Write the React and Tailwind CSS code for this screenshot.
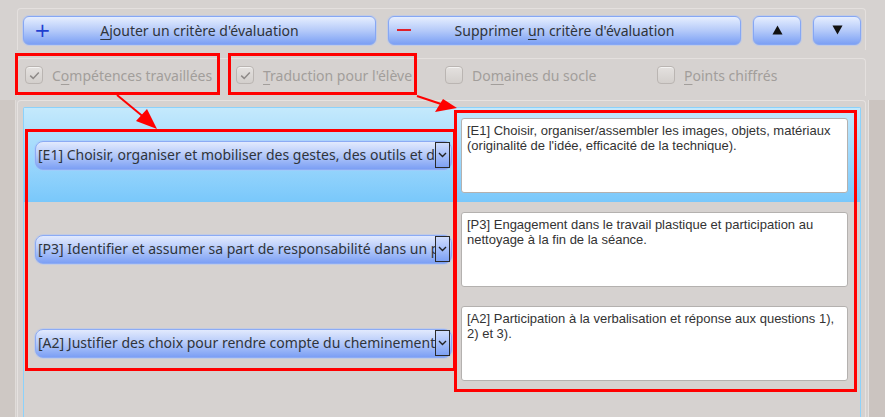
import React from "react";

const ui = "font-['Noto_Sans',sans-serif]";

function U({ children }) {
  return <span className="underline decoration-1 underline-offset-[3px]">{children}</span>;
}

function Check({ checked }) {
  return (
    <span className="w-[18px] h-[18px] shrink-0 rounded-[4px] border border-[#bab5b2] bg-linear-to-b from-[#e4e1df] to-[#d3cfcc] flex items-center justify-center shadow-[inset_0_1px_0_rgba(255,255,255,0.6)]">
      {checked && (
        <svg width="11" height="9" viewBox="0 0 11 9">
          <path d="M1.2 4.6 L4.2 7.4 L9.8 1.4" fill="none" stroke="#8e8a88" strokeWidth="1.5" />
        </svg>
      )}
    </span>
  );
}

function CheckItem({ checked, width, children }) {
  return (
    <div className={`flex items-center gap-[9px] ${width}`}>
      <Check checked={checked} />
      <span className={`${ui} text-[14px] text-[#a29e9b] whitespace-nowrap`}>{children}</span>
    </div>
  );
}

function Combo({ text }) {
  return (
    <div className="w-[417px] h-[29px] rounded-[8px] border border-[#8cabf4] bg-linear-to-b from-[#e2eafd] via-[#b3c8f9] to-[#7c9ff4] flex items-center pl-[2px] pr-[1px] shadow-[0_0_0_1px_rgba(170,195,250,0.45)]">
      <span className={`${ui} flex-1 min-w-0 overflow-hidden whitespace-nowrap text-[14px] leading-[18px] text-[#2f343a]`}>
        {text}
      </span>
      <span className="w-[15px] h-[26px] shrink-0 border border-[#2a2a2a] bg-linear-to-b from-[#cfdcfc] to-[#7ea1f4] flex items-center justify-center">
        <svg width="9" height="6" viewBox="0 0 9 6">
          <path d="M1 1 L4.5 4.5 L8 1" fill="none" stroke="#222" strokeWidth="1.4" />
        </svg>
      </span>
    </div>
  );
}

function Note({ children }) {
  return (
    <div className="w-[387px] h-[75px] bg-white border border-[#b4b1af] rounded-[3px] px-[5px] pt-[4px] font-['Liberation_Sans',sans-serif] text-[13px] leading-[15px] text-[#333]">
      {children}
    </div>
  );
}

function Row({ combo, note, blue }) {
  return (
    <div
      className={`h-[94px] flex ${
        blue ? "bg-linear-to-b from-[#c4e9fc] to-[#79c8fb]" : ""
      }`}
    >
      <div className="w-[437px] pl-[11px] flex items-center">
        <Combo text={combo} />
      </div>
      <div className="pt-[10px]">
        <Note>{note}</Note>
      </div>
    </div>
  );
}

const blueBtn =
  "h-[29px] rounded-[6px] border border-[#86a7f4] bg-linear-to-b from-[#e6eefe] via-[#b5caf9] to-[#7ca0f4] shadow-[0_0_0_1px_rgba(170,195,250,0.45)] flex items-center";

export default function App() {
  return (
    <div className="relative w-[885px] h-[417px] overflow-hidden bg-[#d6d2d0] flex flex-col">
      {/* action buttons */}
      <div className="mt-[8px] ml-[17px] w-[849px] h-[42px] border-t border-x border-[#e4e0de] rounded-t-[4px] flex items-center gap-[12px] pl-[5px] pt-[1px]">
        <div className={`${blueBtn} w-[353px] px-[10px]`}>
          <span className="text-[#1f3fd0] text-[20px] leading-none font-['DejaVu_Sans',sans-serif] w-[12px]">+</span>
          <span className={`${ui} flex-1 text-center text-[14px] text-[#2f343a] pr-[12px]`}>
            <U>A</U>jouter un critère d'évaluation
          </span>
        </div>
        <div className={`${blueBtn} w-[353px] px-[8px]`}>
          <span className="w-[14px] h-[2px] bg-[#e0202a]" />
          <span className={`${ui} flex-1 text-center text-[14px] text-[#2f343a] pr-[14px]`}>
            Supprimer <U>u</U>n critère d'évaluation
          </span>
        </div>
        <div className={`${blueBtn} w-[48px] justify-center`}>
          <svg width="11" height="10" viewBox="0 0 11 10">
            <path d="M5.5 0.5 L10.5 9.5 L0.5 9.5 Z" fill="#111" />
          </svg>
        </div>
        <div className={`${blueBtn} w-[48px] justify-center`}>
          <svg width="11" height="10" viewBox="0 0 11 10">
            <path d="M0.5 0.5 L10.5 0.5 L5.5 9.5 Z" fill="#111" />
          </svg>
        </div>
      </div>

      {/* column options */}
      <div className="mt-[8px] ml-[17px] w-[849px] h-[38px] border-t border-x border-[#e4e0de] rounded-t-[4px] flex items-center pl-[7px] pb-[5px]">
        <CheckItem checked width="w-[211px]">
          C<U>o</U>mpétences travaillées
        </CheckItem>
        <CheckItem checked width="w-[209px]">
          <U>T</U>raduction pour l'élève
        </CheckItem>
        <CheckItem width="w-[212px]">
          Do<U>m</U>aines du socle
        </CheckItem>
        <CheckItem>
          <U>P</U>oints chiffrés
        </CheckItem>
      </div>

      {/* criteria list */}
      <div className="flex-1 flex mt-[4px]">
        <div className="w-[16px] bg-[#cec8c4] border-r border-[#e0dcd9]" />
        <div className="ml-[1px] w-[849px] border-t border-x border-[#e6e2e0] rounded-t-[4px] pl-[5px] pr-[4px] pt-[6px]">
          <div className="h-full border-t border-x border-[#8cd2fb] rounded-t-[2px]">
            <Row
              blue
              combo="[E1] Choisir, organiser et mobiliser des gestes, des outils et des matériaux"
              note="[E1] Choisir, organiser/assembler les images, objets, matériaux (originalité de l'idée, efficacité de la technique)."
            />
            <Row
              combo="[P3] Identifier et assumer sa part de responsabilité dans un processus"
              note="[P3] Engagement dans le travail plastique et participation au nettoyage à la fin de la séance."
            />
            <Row
              combo="[A2] Justifier des choix pour rendre compte du cheminement"
              note="[A2] Participation à la verbalisation et réponse aux questions 1), 2) et 3)."
            />
          </div>
        </div>
        <div className="flex-1 ml-[2px] border-l border-[#e6e2e0] bg-[#cbc4c0]" />
      </div>

      {/* annotations */}
      <svg className="absolute inset-0 pointer-events-none" width="885" height="417" viewBox="0 0 885 417">
        <g fill="none" stroke="#ff0000" strokeWidth="3">
          <rect x="16.5" y="54.5" width="202" height="39" />
          <rect x="229.5" y="54.5" width="186" height="39" />
          <rect x="26.5" y="130.5" width="428" height="239" />
          <rect x="455.5" y="111.5" width="400" height="279" />
        </g>
        <g stroke="#ff0000" strokeWidth="2">
          <line x1="117" y1="95" x2="146" y2="119" />
          <line x1="417" y1="96" x2="444" y2="105" />
        </g>
        <g fill="#ff0000">
          <polygon points="157,129 136,121 147,109" />
          <polygon points="457,108 435,112 443,99" />
        </g>
      </svg>
    </div>
  );
}
